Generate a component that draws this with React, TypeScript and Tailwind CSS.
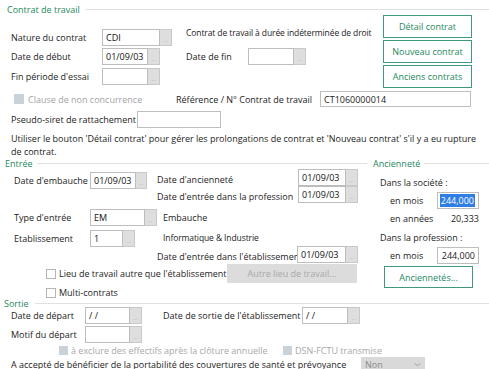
import React from "react";

const G = "text-[#23885c]";

function Combo({ w, text = "", btn = 12, h = 17 }: { w: number; text?: string; btn?: number; h?: number }) {
  return (
    <div className="flex shrink-0" style={{ width: w, height: h }}>
      <div className="flex-1 border border-[#bdbdbd] bg-white pl-[3px] flex items-center text-[#111] leading-none">{text}</div>
      <div className="shrink-0 bg-[#dedede] border border-[#c9c9c9] border-l-0 flex items-end justify-center pb-[2px]" style={{ width: btn }}>
        <span className="text-[6px] leading-none text-[#b0b0b0]">...</span>
      </div>
    </div>
  );
}

function Box({ w, h = 17, children, cls = "" }: { w: number; h?: number; children?: React.ReactNode; cls?: string }) {
  return (
    <div className={"shrink-0 border border-[#bdbdbd] bg-white flex items-center px-[3px] leading-none " + cls} style={{ width: w, height: h }}>
      {children}
    </div>
  );
}

function GBtn({ label, w = 89, h = 23 }: { label: string; w?: number; h?: number }) {
  return (
    <div className={"shrink-0 border border-[#3f9a79] bg-white flex items-center justify-center " + G} style={{ width: w, height: h }}>
      {label}
    </div>
  );
}

function Chk({ disabled = false, s = 10 }: { disabled?: boolean; s?: number }) {
  return (
    <div
      className={"shrink-0 " + (disabled ? "bg-[#c9d1d9]" : "bg-white border border-[#b5b5b5]")}
      style={{ width: s, height: s }}
    />
  );
}

function Header({ label, ml, h, lineMl, mr = 0 }: { label: string; ml: number; h: number; lineMl: number; mr?: number }) {
  return (
    <div className="flex items-center" style={{ height: h }}>
      <span className={G + " leading-none"} style={{ marginLeft: ml }}>{label}</span>
      <div className="flex-1 h-px bg-[#e0e0e0]" style={{ marginLeft: lineMl, marginRight: mr }} />
    </div>
  );
}

export default function App() {
  return (
    <div className="w-[489px] h-[369px] overflow-hidden bg-white text-[#1c1c1c] text-[9px] font-['Open_Sans',sans-serif] leading-none whitespace-nowrap">
      {/* Contrat de travail */}
      <div className="pt-[4px]">
        <Header label="Contrat de travail" ml={7} h={11} lineMl={6} />
      </div>
      <div className="flex">
        <div className="w-[383px] pt-[14px]">
          <div className="flex items-center h-[17px]">
            <span className="ml-[11px] w-[91px]">Nature du contrat</span>
            <Combo w={70} text="CDI" />
            <span className="ml-[14px] mb-[8px] text-[8.5px] tracking-[-0.1px]">Contrat de travail à durée indéterminée de droit</span>
          </div>
          <div className="flex items-center h-[17px] mt-[2px]">
            <span className="ml-[11px] w-[91px]">Date de début</span>
            <Combo w={58} text="01/09/03" />
            <span className="ml-[26px] w-[62px]">Date de fin</span>
            <Combo w={58} />
          </div>
          <div className="flex items-center h-[17px] mt-[3px]">
            <span className="ml-[11px] w-[91px]">Fin période d'essai</span>
            <Combo w={58} />
          </div>
        </div>
        <div className="flex flex-col gap-[2px]">
          <GBtn label="Détail contrat" />
          <GBtn label="Nouveau contrat" />
          <GBtn label="Anciens contrats" />
        </div>
      </div>
      <div className="flex items-center h-[16px] mt-[3px]">
        <div className="w-[176px] flex items-center pl-[14px]">
          <Chk disabled />
          <span className="ml-[4px] text-[#a3a3a3]">Clause de non concurrence</span>
        </div>
        <span className="w-[144px]">Référence / N° Contrat de travail</span>
        <Box w={151} h={16}>CT1060000014</Box>
      </div>
      <div className="flex items-center h-[17px] mt-[4px]">
        <span className="ml-[11px] w-[126px]">Pseudo-siret de rattachement</span>
        <Box w={84} />
      </div>
      <div className="ml-[11px] mt-[4px] leading-[13px]">
        Utiliser le bouton 'Détail contrat' pour gérer les prolongations de contrat et 'Nouveau contrat' s'il y a eu rupture
        <br />
        de contrat.
      </div>

      {/* Entrée + Ancienneté */}
      <div className="flex">
        <div className="w-[372px]">
          <Header label="Entrée" ml={5} h={11} lineMl={4} mr={5} />
          <div className="flex">
            <div className="w-[157px] pt-[3px]">
              <div className="flex items-center h-[17px]">
                <span className="ml-[14px] w-[76px]">Date d'embauche</span>
                <Combo w={57} text="01/09/03" btn={11} />
              </div>
            </div>
            <div className="flex flex-col">
              <div className="flex items-center h-[17px]">
                <span className="w-[141px] pt-[3px]">Date d'ancienneté</span>
                <Combo w={60} text="01/09/03" btn={12} />
              </div>
              <div className="flex items-center h-[17px]">
                <span className="w-[141px] pt-[3px]">Date d'entrée dans la profession</span>
                <Combo w={60} text="01/09/03" btn={12} />
              </div>
            </div>
          </div>
          <div className="flex items-center h-[17px] mt-[6px]">
            <span className="ml-[14px] w-[76px]">Type d'entrée</span>
            <Combo w={67} text="EM" />
            <span className="ml-[6px]">Embauche</span>
          </div>
          <div className="flex items-center h-[17px] mt-[4px]">
            <span className="ml-[14px] w-[76px]">Etablissement</span>
            <Combo w={45} text="1" />
            <span className="ml-[28px] text-[8.5px] tracking-[-0.1px]">Informatique &amp; Industrie</span>
          </div>
          <div className="flex items-center h-[17px] -mt-[1px]">
            <span className="ml-[157px] w-[140px] pt-[3px]">Date d'entrée dans l'établissement</span>
            <Combo w={61} text="01/09/03" />
          </div>
          <div className="flex items-center h-[19px] mt-[1px]">
            <div className="ml-[46px] w-[181px] flex items-center">
              <Chk />
              <span className="ml-[3px]">Lieu de travail autre que l'établissement</span>
            </div>
            <div className="w-[130px] h-[19px] bg-[#dcdcdc] flex items-center justify-center text-[#a8a8a8]">Autre lieu de travail...</div>
          </div>
          <div className="flex items-center h-[13px] mt-[3px]">
            <div className="ml-[46px] flex items-center">
              <Chk />
              <span className="ml-[3px]">Multi-contrats</span>
            </div>
          </div>
        </div>
        <div className="flex-1">
          <Header label="Ancienneté" ml={1} h={11} lineMl={4} />
          <div className="flex items-center h-[13px] mt-[7px]">
            <span className="ml-[8px]">Dans la société :</span>
          </div>
          <div className="flex items-center h-[17px] mt-[3px]">
            <span className="ml-[18px] w-[47px]">en mois</span>
            <Box w={42} cls="justify-end px-[1px]">
              <span className="bg-[#2f7ee6] text-white px-[1px] py-[2px]">244,000</span>
            </Box>
          </div>
          <div className="flex items-center h-[13px] mt-[3px]">
            <span className="ml-[18px] w-[47px]">en années</span>
            <span className="w-[42px] text-right">20,333</span>
          </div>
          <div className="flex items-center h-[13px] mt-[6px]">
            <span className="ml-[8px]">Dans la profession :</span>
          </div>
          <div className="flex items-center h-[17px] mt-[3px]">
            <span className="ml-[18px] w-[47px]">en mois</span>
            <Box w={42} cls="justify-end">244,000</Box>
          </div>
          <div className="mt-[2px] ml-[12px]">
            <GBtn label="Anciennetés..." h={22} />
          </div>
        </div>
      </div>

      {/* Sortie */}
      <Header label="Sortie" ml={4} h={8} lineMl={6} />
      <div className="flex items-center h-[17px]">
        <span className="ml-[11px] w-[74px]">Date de départ</span>
        <Combo w={57} text="/ /" />
        <span className="ml-[21px] w-[139px]">Date de sortie de l'établissement</span>
        <Combo w={58} text="/ /" />
      </div>
      <div className="flex items-center h-[17px] mt-[2px]">
        <span className="ml-[11px] w-[74px]">Motif du départ</span>
        <Combo w={57} />
      </div>
      <div className="flex items-center h-[12px] mt-[1px] text-[#a8a8a8]">
        <div className="ml-[59px] w-[224px] flex items-center">
          <Chk disabled s={9} />
          <span className="ml-[3px]">à exclure des effectifs après la clôture annuelle</span>
        </div>
        <Chk disabled s={9} />
        <span className="ml-[3px]">DSN-FCTU transmise</span>
      </div>
      <div className="flex items-center h-[14px] mt-[1px]">
        <span className="ml-[11px] w-[350px]">A accepté de bénéficier de la portabilité des couvertures de santé et prévoyance</span>
        <div className="w-[64px] h-[14px] bg-[#d9d9d9] flex items-center justify-between px-[4px] text-[#8a8a8a]">
          <span>Non</span>
          <svg width="7" height="5" viewBox="0 0 7 5"><path d="M0.5 1 L3.5 4 L6.5 1" fill="none" stroke="#a0a0a0" strokeWidth="1" /></svg>
        </div>
      </div>
    </div>
  );
}
